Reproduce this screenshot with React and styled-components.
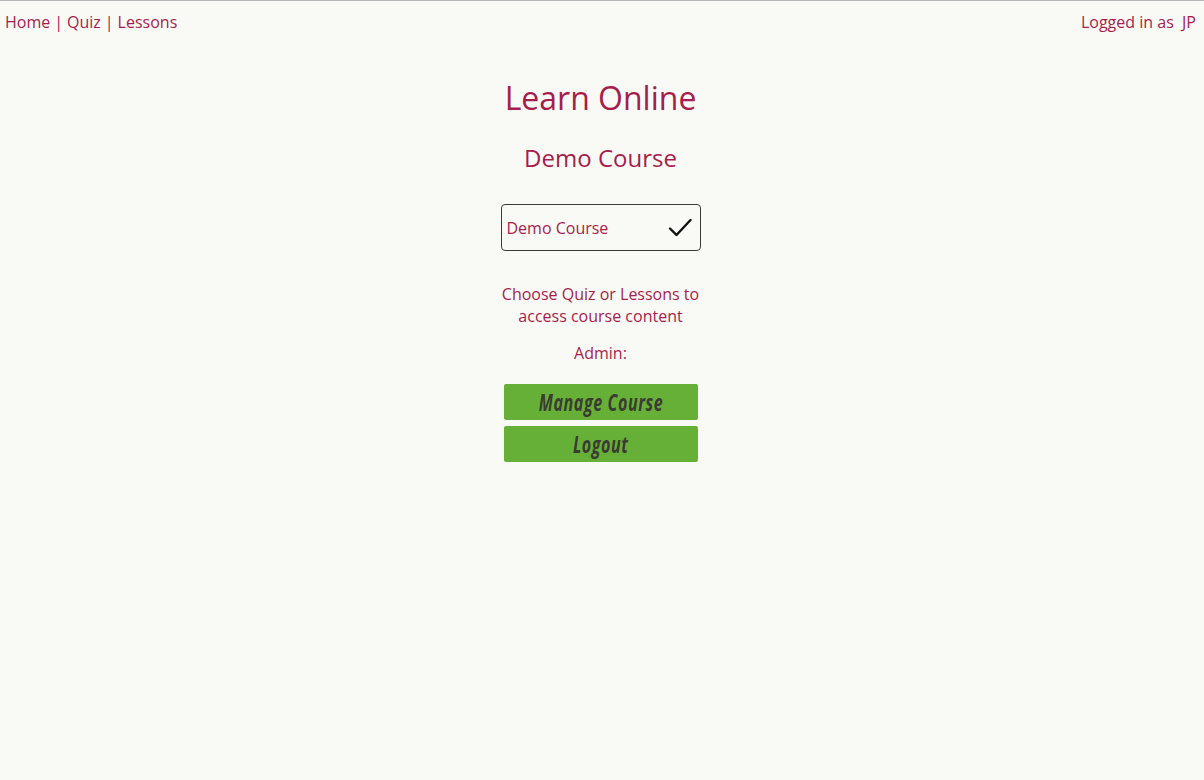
import styled, { createGlobalStyle } from 'styled-components'

const GlobalStyle = createGlobalStyle`
  html, body {
    margin: 0;
    padding: 0;
    background: #f9faf6;
    font-family: "Open Sans", "Liberation Sans", sans-serif;
    color: #a61d4b;
  }
  body {
    border-top: 1px solid #b5b5b5;
  }
`

const TopBar = styled.nav`
  display: flex;
  justify-content: space-between;
  align-items: center;
  padding: 10px 8px 0 5px;
  font-size: 16px;
  line-height: 22px;
`

const NavLinks = styled.div`
  display: flex;
  gap: 4px;
`

const NavLink = styled.a`
  color: inherit;
  text-decoration: none;
`

const Main = styled.main`
  display: flex;
  flex-direction: column;
  align-items: center;
  padding: 43px 3px 0 0;
`

const Title = styled.h1`
  margin: 0;
  font-size: 32px;
  font-weight: 400;
  line-height: 44px;
`

const Subtitle = styled.h2`
  margin: 21px 0 0;
  font-size: 24px;
  font-weight: 400;
  line-height: 34px;
`

const Select = styled.div`
  box-sizing: border-box;
  width: 200px;
  height: 47px;
  margin-top: 29px;
  border: 1px solid #3a3a3a;
  border-radius: 4px;
  display: flex;
  align-items: center;
  justify-content: space-between;
  padding: 0 8px 0 5px;
  font-size: 16px;
`

const Info = styled.p`
  margin: 32px 0 0;
  width: 210px;
  text-align: center;
  font-size: 16px;
  line-height: 22px;
`

const Label = styled.p`
  margin: 15px 0 0;
  font-size: 16px;
  line-height: 22px;
`

const Buttons = styled.div`
  display: flex;
  flex-direction: column;
  gap: 6px;
  margin-top: 20px;
`

const Button = styled.button`
  width: 194px;
  height: 36px;
  border: none;
  border-radius: 2px;
  background: #67b037;
  color: #3a3c32;
  font-family: "Open Sans", sans-serif;
  font-style: italic;
  font-weight: 700;
  font-size: 23px;
  cursor: pointer;
  padding: 0;
  display: flex;
  align-items: center;
  justify-content: center;
`

const Condensed = styled.span`
  display: inline-block;
  transform: scaleX(0.7);
  letter-spacing: 0.8px;
`

function Check() {
  return (
    <svg width="24" height="24" viewBox="0 0 24 24" fill="none" stroke="#111" strokeWidth="2.4" strokeLinecap="round" strokeLinejoin="round">
      <path d="M2 12.5 L8.5 19 L22.5 4" />
    </svg>
  )
}

export default function App() {
  return (
    <>
      <GlobalStyle />
      <TopBar>
        <NavLinks>
          <NavLink href="#">Home</NavLink>
          <span>|</span>
          <NavLink href="#">Quiz</NavLink>
          <span>|</span>
          <NavLink href="#">Lessons</NavLink>
        </NavLinks>
        <span>Logged in as&nbsp; JP</span>
      </TopBar>
      <Main>
        <Title>Learn Online</Title>
        <Subtitle>Demo Course</Subtitle>
        <Select>
          <span>Demo Course</span>
          <Check />
        </Select>
        <Info>Choose Quiz or Lessons to access course content</Info>
        <Label>Admin:</Label>
        <Buttons>
          <Button><Condensed>Manage Course</Condensed></Button>
          <Button><Condensed>Logout</Condensed></Button>
        </Buttons>
      </Main>
    </>
  )
}
